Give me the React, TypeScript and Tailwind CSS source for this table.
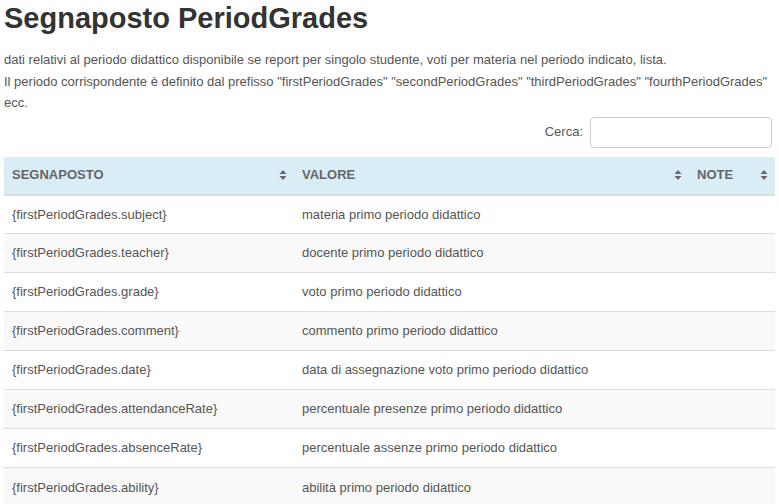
import * as React from "react";

const rows = [
  ["{firstPeriodGrades.subject}", "materia primo periodo didattico"],
  ["{firstPeriodGrades.teacher}", "docente primo periodo didattico"],
  ["{firstPeriodGrades.grade}", "voto primo periodo didattico"],
  ["{firstPeriodGrades.comment}", "commento primo periodo didattico"],
  ["{firstPeriodGrades.date}", "data di assegnazione voto primo periodo didattico"],
  ["{firstPeriodGrades.attendanceRate}", "percentuale presenze primo periodo didattico"],
  ["{firstPeriodGrades.absenceRate}", "percentuale assenze primo periodo didattico"],
  ["{firstPeriodGrades.ability}", "abilità primo periodo didattico"],
];

function SortIcon() {
  return (
    <svg width="8" height="12" viewBox="0 0 8 12" className="absolute right-[7px] top-1/2 -translate-y-1/2">
      <path d="M4 1 L7.5 5 L0.5 5 Z" fill="#666" />
      <path d="M4 11 L7.5 7 L0.5 7 Z" fill="#666" />
    </svg>
  );
}

export default function App() {
  return (
    <div className="px-[4px] text-[#555] font-['Liberation_Sans',Arial,sans-serif] bg-white min-h-[504px]">
      <h1 className="text-[29px] leading-[34px] font-bold text-[#333] pt-[1px]">Segnaposto PeriodGrades</h1>
      <div className="mt-[14px] text-[13px] leading-[21.5px]">
        <p>dati relativi al periodo didattico disponibile se report per singolo studente, voti per materia nel periodo indicato, lista.</p>
        <p>
          Il periodo corrispondente è definito dal prefisso "firstPeriodGrades" "secondPeriodGrades" "thirdPeriodGrades" "fourthPeriodGrades"
          ecc.
        </p>
      </div>
      <div className="flex justify-end items-center gap-[7px] mt-[3px] text-[13px]">
        <label>Cerca:</label>
        <input className="w-[182px] h-[31px] border border-[#ccc] rounded-[4px] mr-[3px] outline-none" />
      </div>
      <table className="mt-[9px] w-[771px] table-fixed border-collapse text-[13px]">
        <colgroup>
          <col className="w-[290px]" />
          <col className="w-[395px]" />
          <col className="w-[86px]" />
        </colgroup>
        <thead>
          <tr className="bg-[#d9edf7] h-[38px] border-b-2 border-[#ddd]">
            {["SEGNAPOSTO", "VALORE", "NOTE"].map((h) => (
              <th key={h} className="relative text-left font-bold px-[8px] text-[13px] text-[#666]">
                {h}
                <SortIcon />
              </th>
            ))}
          </tr>
        </thead>
        <tbody>
          {rows.map(([k, v], i) => (
            <tr key={k} className={"h-[39px] border-t border-[#ddd] " + (i % 2 === 1 ? "bg-[#f9f9f9]" : "bg-white")}>
              <td className="px-[8px]">{k}</td>
              <td className="px-[8px]">{v}</td>
              <td className="px-[8px]"></td>
            </tr>
          ))}
        </tbody>
      </table>
    </div>
  );
}
